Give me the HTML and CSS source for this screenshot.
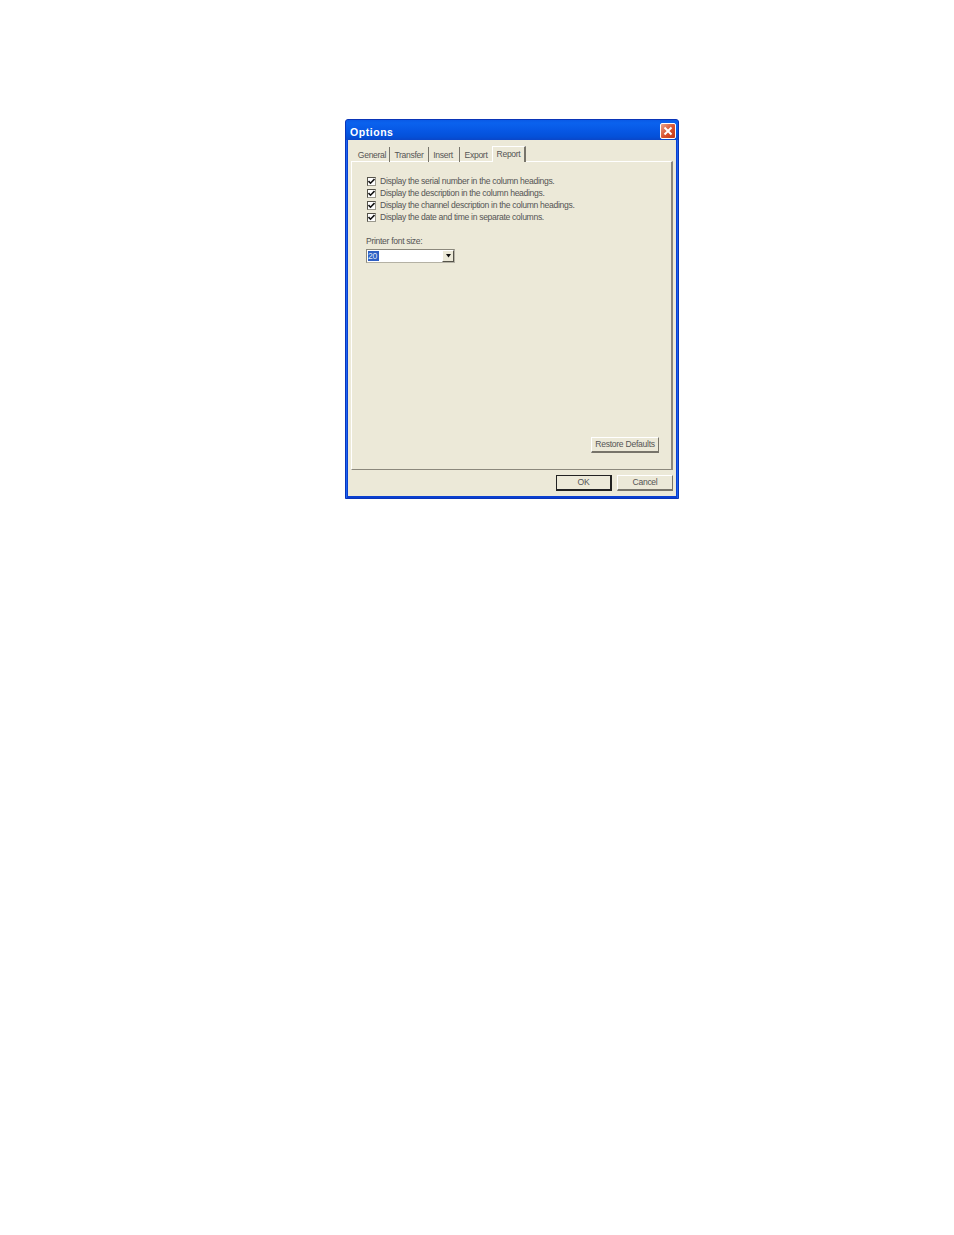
FILE: index.html
```html
<!DOCTYPE html>
<html lang="en">
<head>
<meta charset="utf-8">
<title>Options</title>
<link rel="stylesheet" href="styles.css">
</head>
<body>
<div class="dialog">
  <div class="titlebar">
    <span class="title">Options</span>
    <span class="close"><svg width="12" height="12" viewBox="0 0 12 12"><path d="M2.5 2.5L9.5 9.5M9.5 2.5L2.5 9.5" stroke="#fff" stroke-width="2"/></svg></span>
  </div>
  <div class="client">
    <div class="tabs">
      <span class="tab t1">General</span>
      <span class="tab t2">Transfer</span>
      <span class="tab t3">Insert</span>
      <span class="tab t4">Export</span>
      <span class="tab active">Report</span>
    </div>
    <div class="panel">
      <div class="checks">
        <div class="check"><span class="box"><svg width="7" height="7" viewBox="0 0 7 7"><path d="M0.5 3L2.5 5.2L6.5 1" fill="none" stroke="#111" stroke-width="1.6"/></svg></span>Display the serial number in the column headings.</div>
        <div class="check"><span class="box"><svg width="7" height="7" viewBox="0 0 7 7"><path d="M0.5 3L2.5 5.2L6.5 1" fill="none" stroke="#111" stroke-width="1.6"/></svg></span>Display the description in the column headings.</div>
        <div class="check"><span class="box"><svg width="7" height="7" viewBox="0 0 7 7"><path d="M0.5 3L2.5 5.2L6.5 1" fill="none" stroke="#111" stroke-width="1.6"/></svg></span>Display the channel description in the column headings.</div>
        <div class="check"><span class="box"><svg width="7" height="7" viewBox="0 0 7 7"><path d="M0.5 3L2.5 5.2L6.5 1" fill="none" stroke="#111" stroke-width="1.6"/></svg></span>Display the date and time in separate columns.</div>
      </div>
      <div class="label">Printer font size:</div>
      <div class="combo">
        <span class="field"><span class="sel">20</span></span>
        <span class="arrow"><svg width="7" height="4" viewBox="0 0 7 4"><path d="M1 0H6L3.5 3.5Z" fill="#111"/></svg></span>
      </div>
      <div class="spacer"></div>
      <div class="panel-foot"><span class="btn restore">Restore Defaults</span></div>
    </div>
    <div class="foot">
      <span class="btn ok">OK</span>
      <span class="btn cancel">Cancel</span>
    </div>
  </div>
</div>
</body>
</html>
```
FILE: styles.css
```css
html, body { margin: 0; padding: 0; background: #fff; }
body { width: 954px; height: 1235px; overflow: hidden; padding: 119px 0 0 345px; box-sizing: border-box; font-family: "Liberation Sans", Arial, sans-serif; font-size: 8.6px; letter-spacing: -0.32px; color: #555; }
.dialog { width: 334px; height: 380px; box-sizing: border-box; background: #0a3fd0; border: 1px solid #0a35b8; border-radius: 3px 3px 0 0; padding: 0 1px 1px; display: flex; flex-direction: column; box-shadow: inset 1px 0 0 #1a63f0, inset -1px 0 0 #1a63f0; }
.titlebar { height: 20px; box-sizing: border-box; margin: 0 -1px; padding: 3px 2px 0 4px; display: flex; align-items: center; justify-content: space-between; background: linear-gradient(#0a5ae6 0, #0a62ee 15%, #0657e4 55%, #0450d8 85%, #0a46c8 100%); border-radius: 2px 2px 0 0; }
.title { color: #fff; font-weight: bold; font-size: 10.5px; letter-spacing: 0.55px; }
.close { width: 16px; height: 16px; box-sizing: border-box; margin-top: -1px; display: flex; align-items: center; justify-content: center; background: linear-gradient(135deg, #e8a48c, #d8502c 55%, #c23a18); border: 1px solid #fff; border-radius: 2px; }
.client { flex: 1; margin: 0 1px 1px; background: #ece9d8; padding: 6px 3px 0; display: flex; flex-direction: column; }
.tabs { height: 16px; display: flex; align-items: flex-end; position: relative; z-index: 1; margin-bottom: -1px; }
.tab { height: 15px; box-sizing: border-box; display: flex; align-items: center; justify-content: center; border-right: 1px solid #77746a; }
.t1 { width: 39px; padding-left: 4px; }
.t2 { width: 39px; }
.t3 { width: 31px; padding-right: 2px; }
.t4 { width: 32px; border-right: 0; }
.tab.active { width: 34px; height: 16px; background: #ece9d8; border-top: 1px solid #fff; border-left: 1px solid #fff; border-right: 2px solid #77746a; padding-bottom: 2px; }
.panel { height: 309px; box-sizing: border-box; border-top: 1px solid #fff; border-left: 1px solid #fff; border-right: 2px solid #8b887c; border-bottom: 1px solid #8b887c; padding: 13px 12px 16px 14px; display: flex; flex-direction: column; }
.checks { display: flex; flex-direction: column; padding-left: 1px; }
.check { height: 12px; display: flex; align-items: center; gap: 4px; white-space: nowrap; }
.box { width: 9px; height: 9px; box-sizing: border-box; flex: none; background: #fff; border: 1px solid #9a988c; border-top-color: #55534a; border-left-color: #55534a; display: flex; align-items: center; justify-content: center; }
.label { margin-top: 13px; height: 10px; line-height: 10px; }
.combo { margin-top: 3px; width: 89px; height: 14px; box-sizing: border-box; background: #fff; border: 1px solid #b4b1a4; border-top-color: #8b887c; border-left-color: #8b887c; display: flex; }
.field { flex: 1; padding: 1px 0 0 1px; line-height: 10px; }
.sel { display: inline-block; background: #2f5fc4; color: #dfe6f5; height: 10px; width: 11px; }
.arrow { width: 12px; box-sizing: border-box; background: #ece9d8; border-left: 1px solid #fff; border-top: 1px solid #fff; border-right: 1px solid #55534a; border-bottom: 1px solid #55534a; display: flex; align-items: center; justify-content: center; }
.spacer { flex: 1; }
.panel-foot { display: flex; justify-content: flex-end; }
.btn { box-sizing: border-box; display: flex; align-items: center; justify-content: center; background: #ece9d8; padding-bottom: 1px; border-top: 1px solid #fff; border-left: 1px solid #fff; border-right: 1px solid #77746a; border-bottom: 2px solid #77746a; }
.restore { width: 68px; height: 16px; letter-spacing: -0.28px; }
.foot { flex: 1; display: flex; justify-content: flex-end; align-items: flex-start; gap: 5px; padding-top: 5px; }
.ok { width: 56px; height: 16px; border: 1px solid #222; border-right-width: 2px; border-bottom-width: 2px; }
.cancel { width: 56px; height: 16px; }
```
